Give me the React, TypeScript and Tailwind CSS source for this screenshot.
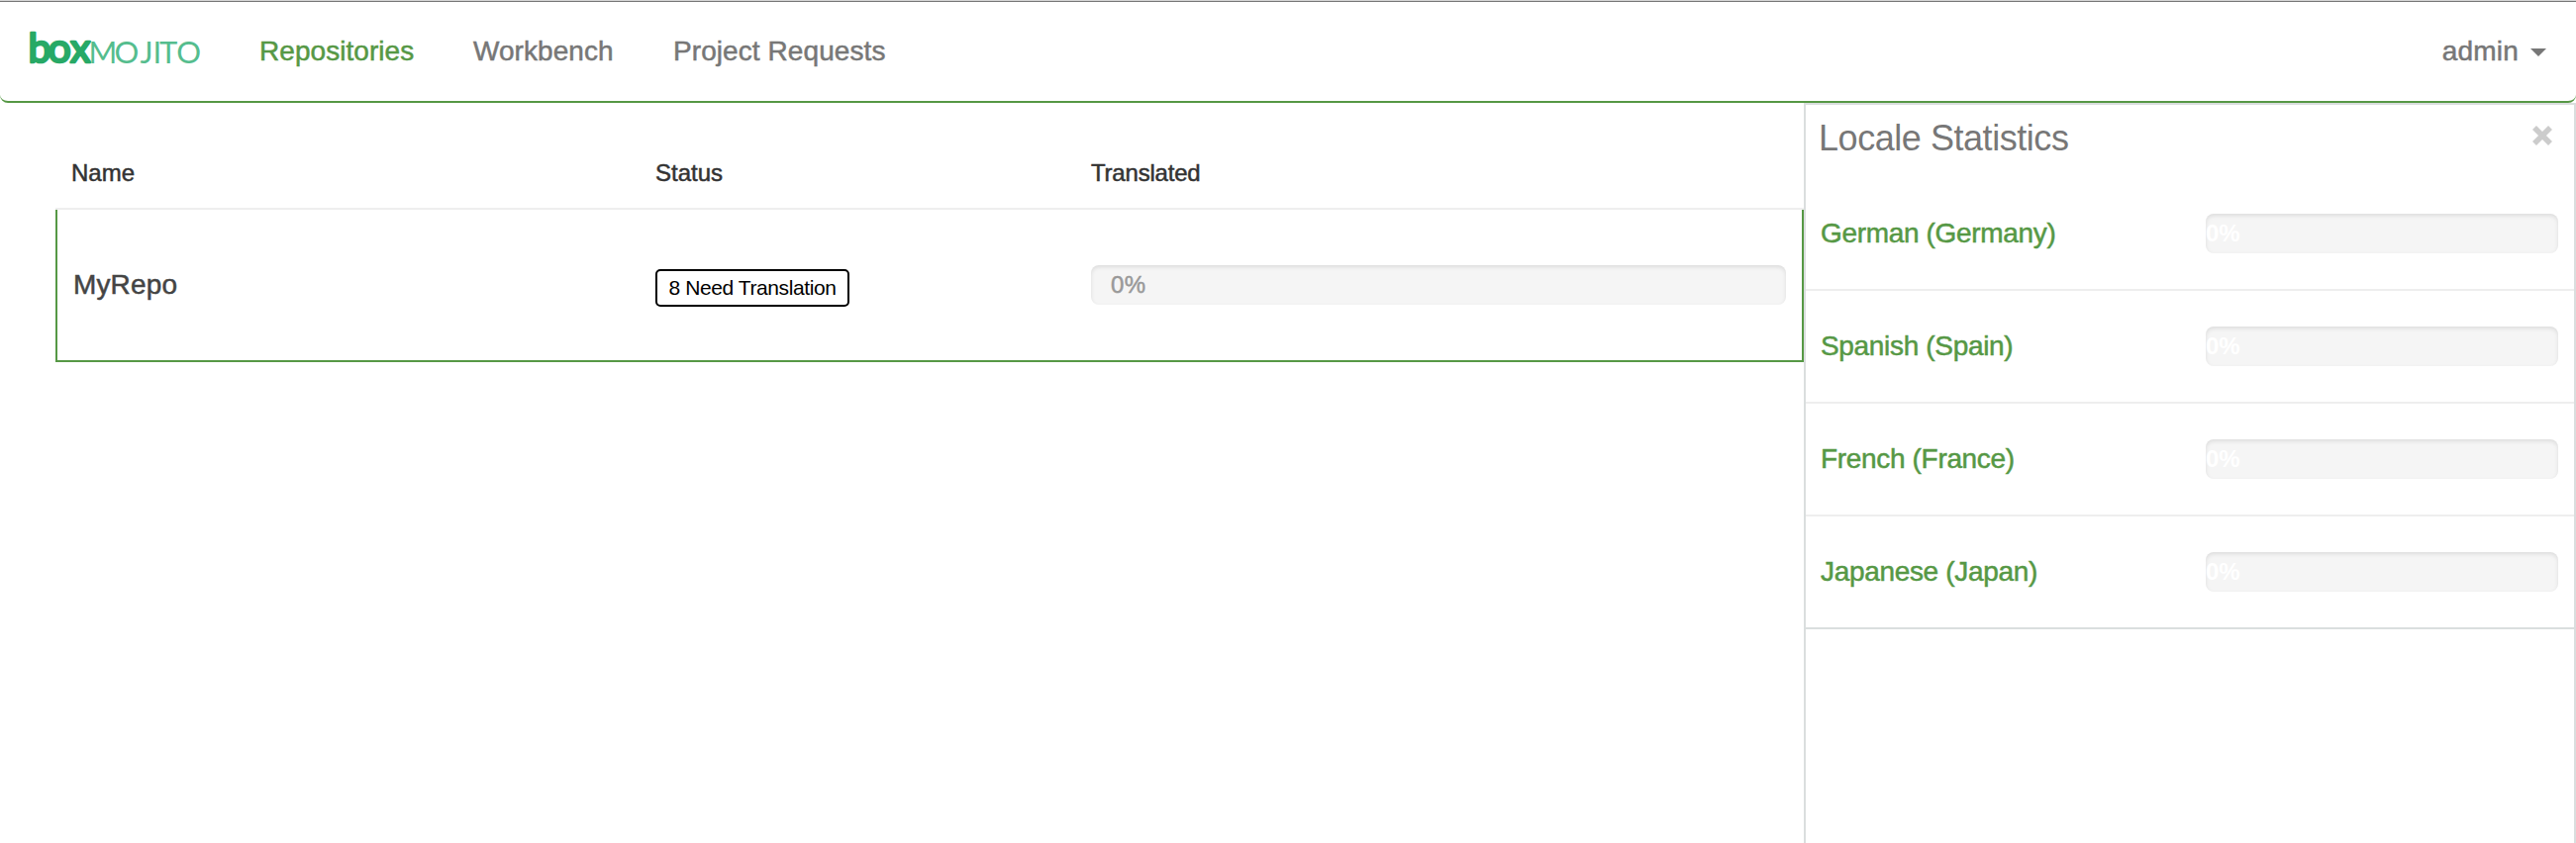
import React from "react";

const locales = ["German (Germany)", "Spanish (Spain)", "French (France)", "Japanese (Japan)"];

function Logo() {
  return (
    <svg className="block h-[64px] w-[184px]" viewBox="-6 -10 184 64" role="img" aria-label="boxmojito">
      <text x="-1.5 18.6 41" y="37.4" fontFamily="Lato, sans-serif" fontWeight={400} fontSize={41} fill="#27a966" stroke="#27a966" strokeWidth={2.6} strokeLinejoin="round">box</text>
      <text x="59.5 85.6 111.5 124.5 131 148.2" y="38" fontFamily="Lato, sans-serif" fontWeight={400} fontSize={31} fill="#55bd8e">MOJITO</text>
    </svg>
  );
}

const track = "h-10 rounded-lg bg-[#f5f5f5] text-2xl leading-10 shadow-[inset_0_2px_4px_rgba(0,0,0,0.1)]";
const medium = "[-webkit-text-stroke:0.5px_currentColor]";

export default function App() {
  return (
    <div className="flex h-[852px] w-[2602px] flex-col overflow-hidden bg-white font-['Liberation_Sans',Arial,sans-serif]">
      <header className="relative z-10 h-[104px] shrink-0 border-t border-[#d5d5d5]">
        <div className={`flex h-[103px] items-start rounded-b-lg border-t border-b-2 border-t-[#777] border-b-[#569845] text-[28px] leading-10 text-[#777] ${medium}`}>
          <div className="ml-6 mt-3.5 w-[184px] [-webkit-text-stroke:0]">
            <Logo />
          </div>
          <nav className="ml-[54px] mt-[30px] flex">
            <a className="w-[216px] tracking-[0.05px] text-[#569845]">Repositories</a>
            <a className="w-[202px] tracking-[0.05px]">Workbench</a>
            <a className="tracking-[0.08px] whitespace-nowrap">Project Requests</a>
          </nav>
          <div className="ml-auto mr-[30px] mt-[30px] flex items-center">
            <span className="tracking-[0.2px]">admin</span>
            <svg className="ml-3 mt-0.5 h-2 w-4" viewBox="0 0 16 8">
              <path d="M0 0h16L8 8z" fill="#777" />
            </svg>
          </div>
        </div>
      </header>

      <div className="flex min-h-0 flex-1">
        <main className="w-[1822px] shrink-0 pl-14 pt-[52px]">
          <div className={`flex h-14 border-b-2 border-[#eee] pl-4 text-2xl leading-[38px] text-[#333] ${medium}`}>
            <div className="w-[590px]">Name</div>
            <div className="w-[440px]">Status</div>
            <div className="tracking-[-0.2px]">Translated</div>
          </div>
          <div className="flex h-[154px] border-2 border-t-0 border-[#569845] pl-4">
            <div className={`w-[588px] pt-14 text-[28px] leading-10 tracking-[0.15px] text-[#444] ${medium}`}>MyRepo</div>
            <div className="w-[440px] pt-[60px]">
              <div className="flex h-[38px] w-[196px] justify-center rounded-[5px] border-2 border-black text-[21px] leading-[33px] tracking-[-0.4px] whitespace-nowrap text-black">
                8 Need Translation
              </div>
            </div>
            <div className="w-[702px] pt-14">
              <div className={`${track} ${medium} pl-5 tracking-[0.4px] text-[#999]`}>0%</div>
            </div>
          </div>
        </main>

        <aside className="w-[780px] shrink-0 border-2 border-b-0 border-[#dadede]">
          <div className="flex h-[74px] justify-between pl-[13px] pr-[22px]">
            <h2 className="pt-[14px] text-[36px] leading-10 tracking-[-0.45px] text-[#777]">Locale Statistics</h2>
            <svg className="mt-[21px] h-5 w-5" viewBox="0 0 20 20">
              <path d="M2 2l16 16M18 2L2 18" stroke="#ccc" strokeWidth="5.6" />
            </svg>
          </div>
          {locales.map((name) => (
            <div key={name} className="flex h-[114px] border-b-2 border-[#eee] pl-[15px] pt-9 last:border-[#dadede]">
              <div className={`w-[389px] text-[28px] leading-10 tracking-[-0.33px] text-[#569845] ${medium}`}>{name}</div>
              <div className={`${track} w-[356px] font-bold text-white`}>0%</div>
            </div>
          ))}
        </aside>
      </div>
    </div>
  );
}
